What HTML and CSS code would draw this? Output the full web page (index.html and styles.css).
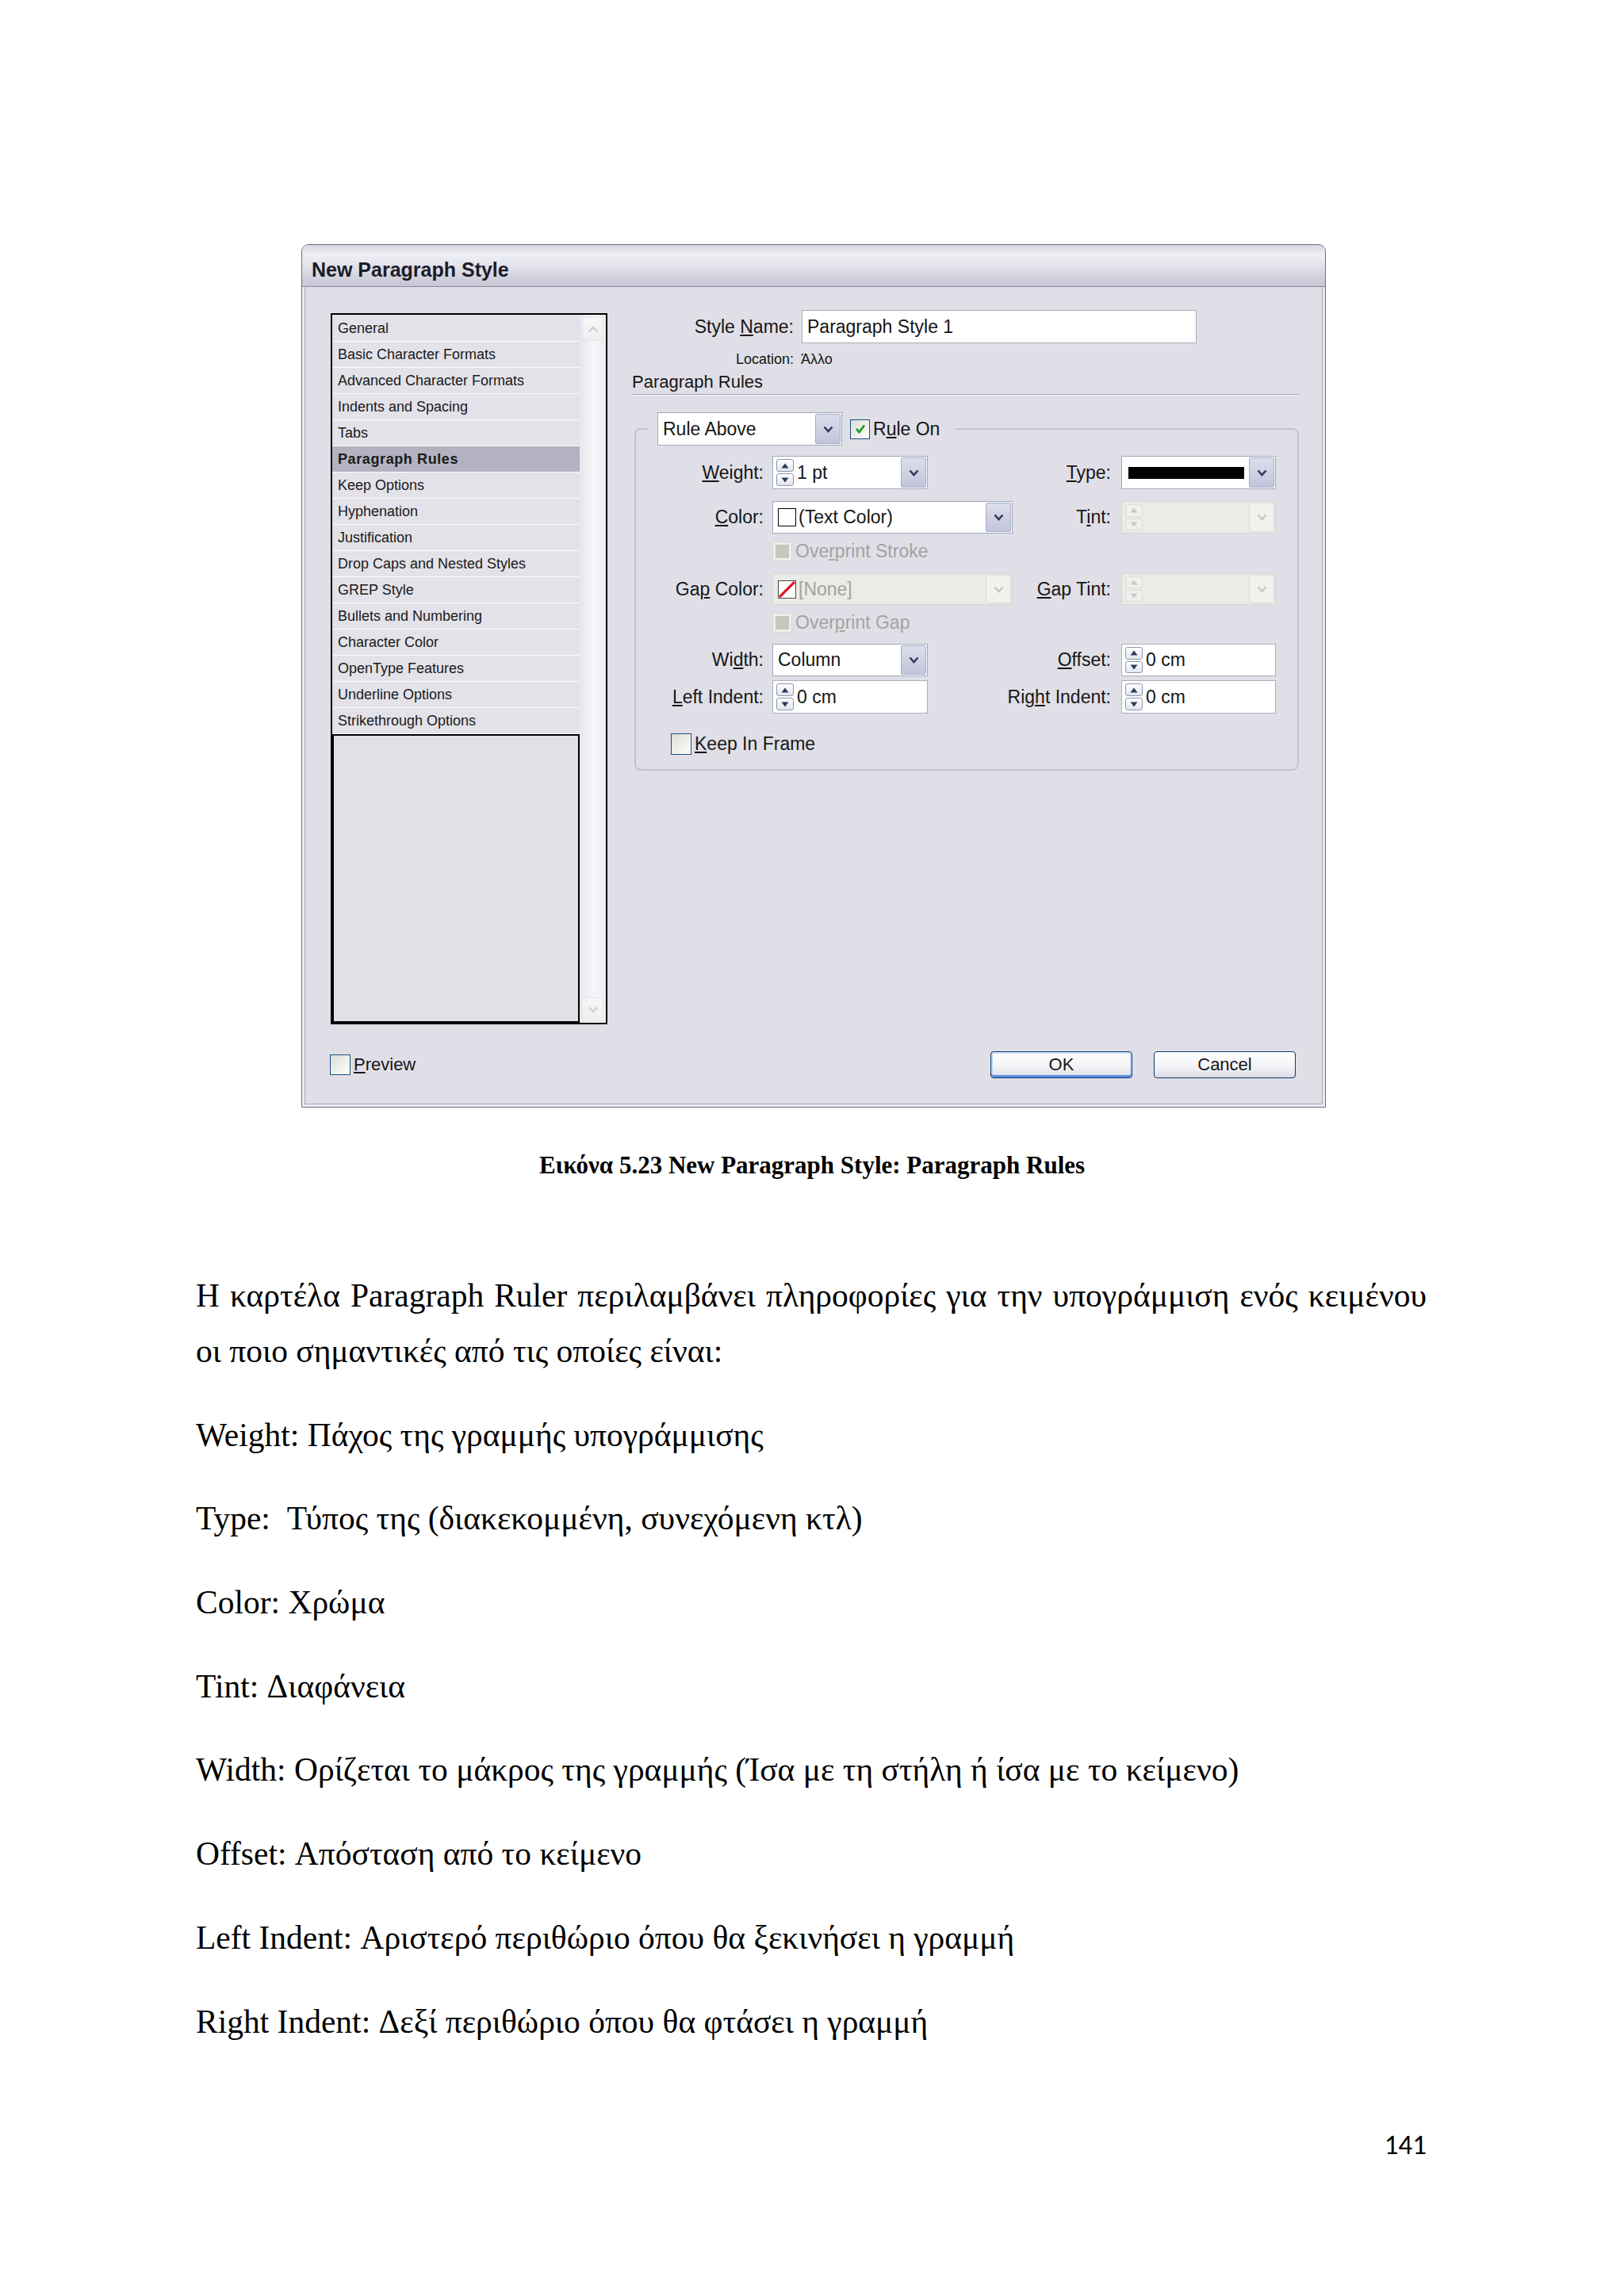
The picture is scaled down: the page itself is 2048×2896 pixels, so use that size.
FILE: index.html
```html
<!DOCTYPE html>
<html lang="el">
<head>
<meta charset="utf-8">
<title>New Paragraph Style: Paragraph Rules</title>
<link rel="stylesheet" href="styles.css">
</head>
<body>
<div class="page">
  <div class="dialog">
    <div class="titlebar">New Paragraph Style</div>
    <div class="dbody">
      <div class="main">
        <div class="list">
          <div class="items">
            <div class="item">General</div>
            <div class="item">Basic Character Formats</div>
            <div class="item">Advanced Character Formats</div>
            <div class="item">Indents and Spacing</div>
            <div class="item">Tabs</div>
            <div class="item sel">Paragraph Rules</div>
            <div class="item">Keep Options</div>
            <div class="item">Hyphenation</div>
            <div class="item">Justification</div>
            <div class="item">Drop Caps and Nested Styles</div>
            <div class="item">GREP Style</div>
            <div class="item">Bullets and Numbering</div>
            <div class="item">Character Color</div>
            <div class="item">OpenType Features</div>
            <div class="item">Underline Options</div>
            <div class="item">Strikethrough Options</div>
            <div class="empty"></div>
          </div>
          <div class="scroll">
            <div class="sbtn"><svg width="14" height="9" viewBox="0 0 14 9"><path d="M1.5 7.5 L7 2 L12.5 7.5" fill="none" stroke="#cfcfd2" stroke-width="2.4"/></svg></div>
            <div class="sbtn"><svg width="14" height="9" viewBox="0 0 14 9"><path d="M1.5 1.5 L7 7 L12.5 1.5" fill="none" stroke="#cfcfd2" stroke-width="2.4"/></svg></div>
          </div>
        </div>

        <div class="panel">
          <div class="namerow">
            <span class="nlbl">Style <u>N</u>ame:</span>
            <span class="namefield">Paragraph Style 1</span>
          </div>
          <div class="locrow">
            <span class="loclbl">Location:</span>
            <span class="locval">Άλλο</span>
          </div>
          <div class="heading">Paragraph Rules</div>

          <fieldset class="group">
            <legend class="legend">
              <span class="combo rulesel"><span class="ctext">Rule Above</span><span class="dd"><svg width="13" height="9" viewBox="0 0 13 9"><path d="M1.5 1.5 L6.5 7 L11.5 1.5" fill="none" stroke="#2e3b5c" stroke-width="2.6"/></svg></span></span>
              <span class="cb on"><svg width="16" height="16" viewBox="0 0 16 16"><path d="M3 8 L6.5 12 L13 3.5" fill="none" stroke="#1f9e23" stroke-width="2.8"/></svg></span>
              <span class="cblbl">R<u>u</u>le On</span>
            </legend>

            <div class="frow r1">
              <span class="l1"><span><u>W</u>eight:</span></span>
              <span class="slot">
                <span class="combo w196">
                  <span class="spn"><span><svg width="10" height="7" viewBox="0 0 10 7"><path d="M0.5 6.5 L5 0.5 L9.5 6.5 Z" fill="#2e3b5c"/></svg></span><span><svg width="10" height="7" viewBox="0 0 10 7"><path d="M0.5 0.5 L5 6.5 L9.5 0.5 Z" fill="#2e3b5c"/></svg></span></span>
                  <span class="ctext tight">1 pt</span>
                  <span class="dd"><svg width="13" height="9" viewBox="0 0 13 9"><path d="M1.5 1.5 L6.5 7 L11.5 1.5" fill="none" stroke="#2e3b5c" stroke-width="2.6"/></svg></span>
                </span>
              </span>
              <span class="l2"><span><u>T</u>ype:</span></span>
              <span class="combo w195">
                <span class="ctext"><span class="solid"></span></span>
                <span class="dd"><svg width="13" height="9" viewBox="0 0 13 9"><path d="M1.5 1.5 L6.5 7 L11.5 1.5" fill="none" stroke="#2e3b5c" stroke-width="2.6"/></svg></span>
              </span>
            </div>

            <div class="frow r2">
              <span class="l1"><span><u>C</u>olor:</span></span>
              <span class="slot">
                <span class="combo w303">
                  <span class="ctext"><span class="swatch"></span>(Text Color)</span>
                  <span class="dd"><svg width="13" height="9" viewBox="0 0 13 9"><path d="M1.5 1.5 L6.5 7 L11.5 1.5" fill="none" stroke="#2e3b5c" stroke-width="2.6"/></svg></span>
                </span>
              </span>
              <span class="l2"><span>T<u>i</u>nt:</span></span>
              <span class="combo w195 dis">
                <span class="spn"><span><svg width="10" height="7" viewBox="0 0 10 7"><path d="M0.5 6.5 L5 0.5 L9.5 6.5 Z" fill="#c9c9c4"/></svg></span><span><svg width="10" height="7" viewBox="0 0 10 7"><path d="M0.5 0.5 L5 6.5 L9.5 0.5 Z" fill="#c9c9c4"/></svg></span></span>
                <span class="ctext"></span>
                <span class="dd"><svg width="13" height="9" viewBox="0 0 13 9"><path d="M1.5 1.5 L6.5 7 L11.5 1.5" fill="none" stroke="#c9c9c4" stroke-width="2.6"/></svg></span>
              </span>
            </div>

            <div class="frow r3">
              <span class="l1"></span>
              <span class="cb dis"></span>
              <span class="cblbl distext">Ove<u>r</u>print Stroke</span>
            </div>

            <div class="frow r4">
              <span class="l1"><span>Ga<u>p</u> Color:</span></span>
              <span class="slot">
                <span class="combo w303 dis">
                  <span class="ctext"><span class="swatch none"><svg width="21" height="21" viewBox="0 0 21 21"><path d="M1 20 L20 1" stroke="#e0161b" stroke-width="3.2"/></svg></span><span class="distext">[None]</span></span>
                  <span class="dd"><svg width="13" height="9" viewBox="0 0 13 9"><path d="M1.5 1.5 L6.5 7 L11.5 1.5" fill="none" stroke="#c9c9c4" stroke-width="2.6"/></svg></span>
                </span>
              </span>
              <span class="l2"><span><u>G</u>ap Tint:</span></span>
              <span class="combo w195 dis">
                <span class="spn"><span><svg width="10" height="7" viewBox="0 0 10 7"><path d="M0.5 6.5 L5 0.5 L9.5 6.5 Z" fill="#c9c9c4"/></svg></span><span><svg width="10" height="7" viewBox="0 0 10 7"><path d="M0.5 0.5 L5 6.5 L9.5 0.5 Z" fill="#c9c9c4"/></svg></span></span>
                <span class="ctext"></span>
                <span class="dd"><svg width="13" height="9" viewBox="0 0 13 9"><path d="M1.5 1.5 L6.5 7 L11.5 1.5" fill="none" stroke="#c9c9c4" stroke-width="2.6"/></svg></span>
              </span>
            </div>

            <div class="frow r5">
              <span class="l1"></span>
              <span class="cb dis"></span>
              <span class="cblbl distext">Over<u>p</u>rint Gap</span>
            </div>

            <div class="frow r6">
              <span class="l1"><span>Wi<u>d</u>th:</span></span>
              <span class="slot">
                <span class="combo w196">
                  <span class="ctext">Column</span>
                  <span class="dd"><svg width="13" height="9" viewBox="0 0 13 9"><path d="M1.5 1.5 L6.5 7 L11.5 1.5" fill="none" stroke="#2e3b5c" stroke-width="2.6"/></svg></span>
                </span>
              </span>
              <span class="l2"><span><u>O</u>ffset:</span></span>
              <span class="combo w195 plain">
                <span class="spn"><span><svg width="10" height="7" viewBox="0 0 10 7"><path d="M0.5 6.5 L5 0.5 L9.5 6.5 Z" fill="#2e3b5c"/></svg></span><span><svg width="10" height="7" viewBox="0 0 10 7"><path d="M0.5 0.5 L5 6.5 L9.5 0.5 Z" fill="#2e3b5c"/></svg></span></span>
                <span class="ctext tight">0 cm</span>
              </span>
            </div>

            <div class="frow r7">
              <span class="l1"><span><u>L</u>eft Indent:</span></span>
              <span class="slot">
                <span class="combo w196 plain">
                  <span class="spn"><span><svg width="10" height="7" viewBox="0 0 10 7"><path d="M0.5 6.5 L5 0.5 L9.5 6.5 Z" fill="#2e3b5c"/></svg></span><span><svg width="10" height="7" viewBox="0 0 10 7"><path d="M0.5 0.5 L5 6.5 L9.5 0.5 Z" fill="#2e3b5c"/></svg></span></span>
                  <span class="ctext tight">0 cm</span>
                </span>
              </span>
              <span class="l2"><span>Rig<u>h</u>t Indent:</span></span>
              <span class="combo w195 plain">
                <span class="spn"><span><svg width="10" height="7" viewBox="0 0 10 7"><path d="M0.5 6.5 L5 0.5 L9.5 6.5 Z" fill="#2e3b5c"/></svg></span><span><svg width="10" height="7" viewBox="0 0 10 7"><path d="M0.5 0.5 L5 6.5 L9.5 0.5 Z" fill="#2e3b5c"/></svg></span></span>
                <span class="ctext tight">0 cm</span>
              </span>
            </div>

            <div class="frow r8">
              <span class="cb keep"></span>
              <span class="cblbl"><u>K</u>eep In Frame</span>
            </div>
          </fieldset>
        </div>
      </div>

      <div class="footer">
        <span class="cb prev"></span>
        <span class="cblbl"><u>P</u>review</span>
        <span class="spacer"></span>
        <span class="btn def">OK</span>
        <span class="btn">Cancel</span>
      </div>
    </div>
  </div>

  <p class="caption">Εικόνα 5.23 New Paragraph Style: Paragraph Rules</p>

  <div class="text">
    <p class="just">Η καρτέλα Paragraph Ruler περιλαμβάνει πληροφορίες για την υπογράμμιση ενός κειμένου οι ποιο σημαντικές από τις οποίες είναι:</p>
    <p>Weight: Πάχος της γραμμής υπογράμμισης</p>
    <p>Type:&nbsp; Τύπος της (διακεκομμένη, συνεχόμενη κτλ)</p>
    <p>Color: Χρώμα</p>
    <p>Tint: Διαφάνεια</p>
    <p>Width: Ορίζεται το μάκρος της γραμμής (Ίσα με τη στήλη ή ίσα με το κείμενο)</p>
    <p>Offset: Απόσταση από το κείμενο</p>
    <p>Left Indent: Αριστερό περιθώριο όπου θα ξεκινήσει η γραμμή</p>
    <p class="last">Right Indent: Δεξί περιθώριο όπου θα φτάσει η γραμμή</p>
  </div>

  <div class="pnum">141</div>
</div>
</body>
</html>
```

FILE: styles.css
```css
* { box-sizing: border-box; }

html, body {
  margin: 0;
  padding: 0;
  background: #ffffff;
}

.page {
  width: 2048px;
  height: 2896px;
  padding-top: 308px;
  font-family: "Liberation Serif", "Times New Roman", serif;
  color: #000;
  overflow: hidden;
}

/* ---------- dialog ---------- */
.dialog {
  margin-left: 380px;
  width: 1292px;
  height: 1089px;
  border: 1px solid #6f6f82;
  border-radius: 9px 9px 0 0;
  background: #e0dfe7;
  box-shadow: inset 0 0 0 3px #ebebf1, inset 0 0 0 4px #a9a9b9;
  font-family: "Liberation Sans", Arial, sans-serif;
  color: #161616;
  display: flex;
  flex-direction: column;
}

.titlebar {
  height: 53px;
  border-radius: 8px 8px 0 0;
  border-bottom: 1px solid #8b8b9c;
  background: linear-gradient(#d5d5e2 0%, #efeff5 22%, #e0e0ea 55%, #c5c5d4 100%);
  padding: 11px 0 0 12px;
  font-size: 25px;
  font-weight: bold;
  line-height: 40px;
  color: #1c1c28;
}

.dbody {
  flex: 1;
  display: flex;
  flex-direction: column;
}

.main {
  display: flex;
  align-items: flex-start;
}

/* list */
.list {
  margin: 33px 0 0 36px;
  width: 349px;
  height: 897px;
  border: 2px solid #000;
  display: flex;
  background: #e1e0e7;
}

.items {
  width: 312px;
  display: flex;
  flex-direction: column;
  padding-top: 1px;
}

.item {
  height: 33px;
  flex: none;
  border-bottom: 1px solid #fbfbfe;
  padding-left: 7px;
  font-size: 18px;
  line-height: 33px;
  background: #e3e2e9;
  color: #1a1a1a;
  white-space: nowrap;
}

.item.sel {
  background: #b3b2c0;
  font-weight: bold;
  letter-spacing: 0.6px;
}

.empty {
  flex: 1;
  border: 2px solid #000;
  background: #e1e0e7;
}

.scroll {
  width: 33px;
  display: flex;
  flex-direction: column;
  justify-content: space-between;
  padding: 3px 2px 2px 3px;
  background: linear-gradient(90deg, #e6e6ee, #f6f6fa 55%, #eeeef3);
}

.sbtn {
  width: 27px;
  height: 30px;
  background: linear-gradient(#f7f7f7, #eeeeee);
  border: 1px solid #e4e4ea;
  border-radius: 2px;
  display: flex;
  align-items: center;
  justify-content: center;
}

/* right panel */
.panel {
  width: 841px;
  margin-left: 31px;
  display: flex;
  flex-direction: column;
  font-size: 23px;
}

.namerow {
  margin-top: 29px;
  height: 42px;
  display: flex;
  align-items: center;
}

.nlbl {
  width: 204px;
  text-align: right;
}

.namefield {
  margin-left: 10px;
  width: 498px;
  height: 42px;
  background: #fff;
  border: 1px solid #a9aeb8;
  padding-left: 6px;
  line-height: 40px;
}

.locrow {
  margin-top: 10px;
  height: 20px;
  display: flex;
  align-items: center;
  font-size: 18px;
}

.loclbl {
  width: 204px;
  text-align: right;
}

.locval { margin-left: 9px; }

.heading {
  margin-top: 6px;
  font-size: 22px;
  line-height: 26px;
  padding-bottom: 2px;
  border-bottom: 1px solid #a4a4b4;
  box-shadow: 0 1px 0 #f8f8fb;
}

/* group box */
.group {
  margin: 22px 0 0 3px;
  width: 838px;
  min-width: 0;
  border: 2px solid #c3c3cf;
  border-radius: 8px;
  padding: 13px 0 18px 0;
}

.legend {
  margin-left: 16px;
  padding: 0 20px 0 11px;
  height: 42px;
  display: flex;
  align-items: center;
}

.frow {
  display: flex;
  align-items: center;
  height: 42px;
}

.r2 { margin-top: 15px; height: 41px; }
.r3 { margin-top: 10px; height: 24px; }
.r4 { margin-top: 16px; height: 40px; }
.r5 { margin-top: 10px; height: 24px; }
.r6 { margin-top: 15px; height: 41px; }
.r7 { margin-top: 5px; height: 42px; }
.r8 { margin-top: 25px; height: 27px; padding-left: 44px; }

.l1 {
  width: 172px;
  padding-right: 11px;
  flex: none;
  display: flex;
  justify-content: flex-end;
  white-space: nowrap;
}

.slot {
  width: 303px;
  height: 100%;
  flex: none;
  display: flex;
}

.l2 {
  width: 137px;
  padding-right: 13px;
  flex: none;
  display: flex;
  justify-content: flex-end;
  white-space: nowrap;
}

/* combo / fields */
.combo {
  display: flex;
  align-items: stretch;
  height: 100%;
  background: #fff;
  border: 1px solid #9ea8bd;
  flex: none;
}

.rulesel { width: 233px; height: 42px; }
.w196 { width: 196px; }
.w195 { width: 195px; }
.w303 { width: 303px; }

.combo.plain { border-color: #aab0ba; }

.ctext {
  flex: 1;
  display: flex;
  align-items: center;
  padding-left: 6px;
  white-space: nowrap;
  overflow: hidden;
}

.ctext.tight { padding-left: 4px; }

.dd {
  width: 32px;
  margin: 1px;
  border: 1px solid #a7adc6;
  border-radius: 2px;
  background: linear-gradient(#dcdeec, #c2c5da);
  display: flex;
  align-items: center;
  justify-content: center;
}

.combo.dis {
  background: #ebebe7;
  border-color: #d5d5ce;
}

.combo.dis .dd {
  background: #f1f1ee;
  border-color: #dedcd6;
}

.spn {
  width: 22px;
  margin: 3px 0 3px 4px;
  display: flex;
  flex-direction: column;
  gap: 2px;
}

.spn > span {
  flex: 1;
  border: 1px solid #8e97aa;
  border-radius: 3px;
  background: linear-gradient(#ffffff, #e3e5ee);
  display: flex;
  align-items: center;
  justify-content: center;
}

.combo.dis .spn > span {
  border-color: #dcdcd5;
  background: #efefec;
}

.solid {
  display: block;
  width: 146px;
  height: 15px;
  margin-left: 2px;
  background: #000;
}

.swatch {
  width: 23px;
  height: 23px;
  border: 1px solid #000;
  background: #fff;
  margin-right: 3px;
  flex: none;
  display: flex;
}

.swatch.none {
  border-color: #4a4a4a;
}

.distext { color: #a3a3a0; }

/* checkboxes */
.cb {
  width: 25px;
  height: 25px;
  flex: none;
  border: 1px solid #1c5180;
  background: linear-gradient(135deg, #dcdcd6, #ffffff);
  display: inline-flex;
  align-items: center;
  justify-content: center;
}

.legend .cb { margin-left: 10px; }

.cb.dis {
  border: 1px solid #d8d8d1;
  background: #c7c7bf;
  box-shadow: inset 0 0 0 3px #efefea;
}

.cb.keep { width: 26px; height: 27px; }

.cblbl {
  margin-left: 4px;
  white-space: nowrap;
}

/* footer */
.footer {
  margin-top: 34px;
  height: 34px;
  display: flex;
  align-items: center;
  padding: 0 37px 0 35px;
  font-size: 22px;
}

.cb.prev { width: 26px; height: 26px; }

.spacer { flex: 1; }

.btn {
  width: 179px;
  height: 34px;
  border: 1px solid #0f3a6a;
  border-radius: 4px;
  background: linear-gradient(#ffffff, #f3f3f6 60%, #dcdce5);
  display: flex;
  align-items: center;
  justify-content: center;
  font-size: 22px;
  color: #161616;
}

.btn + .btn { margin-left: 27px; }

.btn.def {
  box-shadow: inset 0 2px 0 #cfe0fb, inset 0 -3px 0 #5f8fe2, inset 2px 0 0 #b9d0f6, inset -2px 0 0 #b9d0f6;
}

/* ---------- document text ---------- */
.caption {
  margin: 55px 0 0;
  text-align: center;
  font-weight: bold;
  font-size: 31px;
  line-height: 35px;
}

.text {
  margin: 112px 0 0 247px;
  width: 1552px;
  font-size: 41.5px;
  line-height: 70px;
}

.text p { margin: 0 0 35.7px; }
.text p.just { text-align: justify; }
.text p.last { margin-bottom: 0; }

.pnum {
  margin: 100px 0 0 247px;
  width: 1552px;
  text-align: right;
  font-family: "Carlito", "Lato", "Liberation Sans", sans-serif;
  font-size: 35px;
  line-height: 40px;
}
```
